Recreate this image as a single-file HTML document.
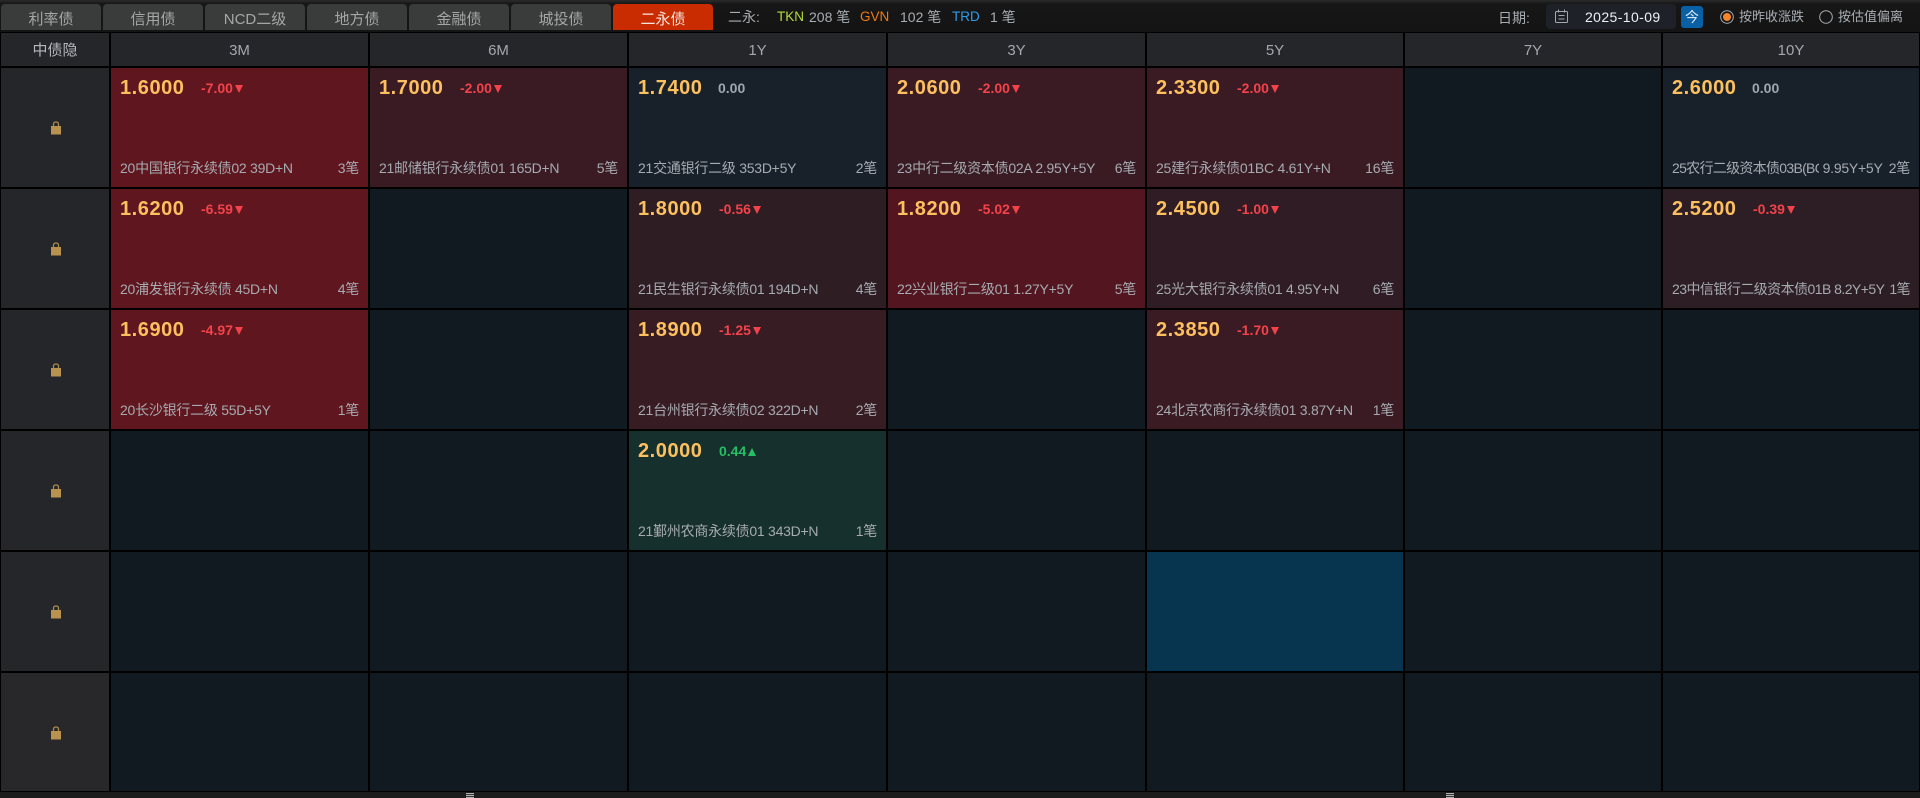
<!DOCTYPE html>
<html lang="zh-CN"><head><meta charset="utf-8"><title>二永债</title>
<style>
*{box-sizing:border-box}
html,body{margin:0;padding:0;width:1920px;height:798px;overflow:hidden;background:#000;font-family:"Liberation Sans","Noto Sans CJK SC",sans-serif}
.top{position:absolute;left:0;top:0;width:1920px;height:32px;background:linear-gradient(#2b2b2b 0,#161616 4px,#141414 100%)}
.t{position:absolute;white-space:nowrap;font-size:14px;line-height:20px;color:#a9adb2}
.tab{position:absolute;top:4px;width:100px;height:26px;border-radius:4px 4px 0 0;background:#3a3c3c;color:#a5a7a7;font-size:15px;line-height:31px;text-align:center;overflow:hidden}
.tab.on{background:#c92c00;color:#f3e6e0}
.h{position:absolute;top:33px;height:33px;background:#24262a;color:#a3a8ae;font-size:15px;line-height:35px;text-align:center}
.l{position:absolute;left:1px;width:108px;height:119px;background:#24262a}
.l svg{position:absolute;left:49px;top:53px}
.c{position:absolute;height:119px;background:#121a21;overflow:hidden}
.x1{left:111px;width:257px}.x2{left:370px;width:257px}.x3{left:629px;width:257px}.x4{left:888px;width:257px}.x5{left:1147px;width:256px}.x6{left:1405px;width:256px}.x7{left:1663px;width:256px}
.r1{top:68px}.r2{top:189px}.r3{top:310px}.r4{top:431px}.r5{top:552px}.r6{top:673px;height:118px}
.p{position:absolute;left:9px;top:6px;font-size:20px;line-height:28px;font-weight:700;color:#fdc05f;letter-spacing:.55px}
.d{position:absolute;left:90px;top:10px;font-size:14px;line-height:20px;font-weight:700;color:#f4424a;white-space:nowrap}
.d.n{left:89px;color:#9ea7b0}.d.g{color:#27bf63}
.d i{display:inline-block;width:0;height:0;margin-left:2px;border-left:4.5px solid transparent;border-right:4.5px solid transparent;border-top:8px solid #f4424a;vertical-align:0}
.d.g i{border-top:0;border-bottom:8px solid #27bf63}
.s{position:absolute;left:9px;right:9px;top:90px;font-size:14px;line-height:20px;color:#a6abb0;white-space:nowrap;letter-spacing:-.25px}
.s b{position:absolute;right:0;top:0;font-weight:400}
.s u{display:inline-block;vertical-align:top;text-decoration:none;overflow:hidden}
.hd{position:absolute;top:793px;width:8px;height:5px;background:repeating-linear-gradient(#b0b0b0 0,#b0b0b0 1px,#3a3a3a 1px,#3a3a3a 2px)}
</style></head><body>
<div class="top"></div>
<div class="tab" style="left:1px">利率债</div><div class="tab" style="left:103px">信用债</div><div class="tab" style="left:205px">NCD二级</div><div class="tab" style="left:307px">地方债</div><div class="tab" style="left:409px">金融债</div><div class="tab" style="left:511px">城投债</div><div class="tab on" style="left:613px">二永债</div>
<div class="t" style="left:728px;top:7px">二永:</div>
<div class="t" style="left:777px;top:7px;color:#b4dc3c;font-size:13.500px">TKN</div><div class="t" style="left:809px;top:7px">208 笔</div>
<div class="t" style="left:860px;top:7px;color:#f07a10;font-size:13.500px">GVN</div><div class="t" style="left:900px;top:7px">102 笔</div>
<div class="t" style="left:952px;top:7px;color:#2f9be8;font-size:13.500px">TRD</div><div class="t" style="left:990px;top:7px">1 笔</div>
<div class="t" style="left:1498px;top:8px">日期:</div>
<div style="position:absolute;left:1546px;top:4px;width:130px;height:25px;background:#1e2228;border-radius:4px"></div>
<svg style="position:absolute;left:1554px;top:9px" width="15" height="15" viewBox="0 0 15 15" fill="none" stroke="#a5a9ad" stroke-width="1"><rect x="1.500" y="2.500" width="12" height="11" rx="1"/><path d="M4.500 .5v3M10.500 .5v3M4.500 6.500h6M4.500 10h6"/></svg>
<div class="t" style="left:1585px;top:7px;color:#eef1f4;letter-spacing:.4px">2025-10-09</div>
<div style="position:absolute;left:1681px;top:6px;width:22px;height:22px;background:#0a60a4;border-radius:3px;color:#d8e6f2;font-size:14px;line-height:22px;text-align:center">今</div>
<svg style="position:absolute;left:1720px;top:10px" width="14" height="14" viewBox="0 0 14 14"><circle cx="7" cy="7" r="6.300" fill="none" stroke="#a9adb2"/><circle cx="7" cy="7" r="4" fill="#f5842a"/></svg>
<div class="t" style="left:1739px;top:7px;font-size:13px">按昨收涨跌</div>
<svg style="position:absolute;left:1819px;top:10px" width="14" height="14" viewBox="0 0 14 14"><circle cx="7" cy="7" r="6.300" fill="none" stroke="#a9adb2"/></svg>
<div class="t" style="left:1838px;top:7px;font-size:13px">按估值偏离</div>

<div class="h" style="left:1px;width:108px;color:#b4b8bc">中债隐</div>
<div class="h x1">3M</div><div class="h x2">6M</div><div class="h x3">1Y</div><div class="h x4">3Y</div><div class="h x5">5Y</div><div class="h x6">7Y</div><div class="h x7">10Y</div>

<div class="l r1"><svg width="12" height="14" viewBox="0 0 12 14"><path d="M3.500 5V3.200C3.500 1.800 4.500 1 6 1s2.500.8 2.500 2.200V5" fill="none" stroke="#a98a4e" stroke-width="1.300"/><rect x="1" y="5" width="10" height="8.500" fill="#b8924e"/></svg></div>
<div class="l r2"><svg width="12" height="14" viewBox="0 0 12 14"><path d="M3.500 5V3.200C3.500 1.800 4.500 1 6 1s2.500.8 2.500 2.200V5" fill="none" stroke="#a98a4e" stroke-width="1.300"/><rect x="1" y="5" width="10" height="8.500" fill="#b8924e"/></svg></div>
<div class="l r3"><svg width="12" height="14" viewBox="0 0 12 14"><path d="M3.500 5V3.200C3.500 1.800 4.500 1 6 1s2.500.8 2.500 2.200V5" fill="none" stroke="#a98a4e" stroke-width="1.300"/><rect x="1" y="5" width="10" height="8.500" fill="#b8924e"/></svg></div>
<div class="l r4"><svg width="12" height="14" viewBox="0 0 12 14"><path d="M3.500 5V3.200C3.500 1.800 4.500 1 6 1s2.500.8 2.500 2.200V5" fill="none" stroke="#a98a4e" stroke-width="1.300"/><rect x="1" y="5" width="10" height="8.500" fill="#b8924e"/></svg></div>
<div class="l r5"><svg width="12" height="14" viewBox="0 0 12 14"><path d="M3.500 5V3.200C3.500 1.800 4.500 1 6 1s2.500.8 2.500 2.200V5" fill="none" stroke="#a98a4e" stroke-width="1.300"/><rect x="1" y="5" width="10" height="8.500" fill="#b8924e"/></svg></div>
<div class="l r6" style="height:118px;background:#28282b"><svg width="12" height="14" viewBox="0 0 12 14"><path d="M3.500 5V3.200C3.500 1.800 4.500 1 6 1s2.500.8 2.500 2.200V5" fill="none" stroke="#a98a4e" stroke-width="1.300"/><rect x="1" y="5" width="10" height="8.500" fill="#b8924e"/></svg></div>

<div class="c x1 r1" style="background:#5f161f"><div class="p">1.6000</div><div class="d">-7.00<i></i></div><div class="s">20中国银行永续债02 39D+N<b>3笔</b></div></div>
<div class="c x2 r1" style="background:#3a1b24"><div class="p">1.7000</div><div class="d">-2.00<i></i></div><div class="s">21邮储银行永续债01 165D+N<b>5笔</b></div></div>
<div class="c x3 r1" style="background:#18212a"><div class="p">1.7400</div><div class="d n">0.00</div><div class="s">21交通银行二级 353D+5Y<b>2笔</b></div></div>
<div class="c x4 r1" style="background:#3a1b24"><div class="p">2.0600</div><div class="d">-2.00<i></i></div><div class="s">23中行二级资本债02A 2.95Y+5Y<b>6笔</b></div></div>
<div class="c x5 r1" style="background:#3a1b24"><div class="p">2.3300</div><div class="d">-2.00<i></i></div><div class="s">25建行永续债01BC 4.61Y+N<b>16笔</b></div></div>
<div class="c x6 r1"></div>
<div class="c x7 r1" style="background:#18212a"><div class="p">2.6000</div><div class="d n">0.00</div><div class="s"><u style="width:147px;letter-spacing:-.7px">25农行二级资本债03B(BC)</u> 9.95Y+5Y<b>2笔</b></div></div>

<div class="c x1 r2" style="background:#5f161f"><div class="p">1.6200</div><div class="d">-6.59<i></i></div><div class="s">20浦发银行永续债 45D+N<b>4笔</b></div></div>
<div class="c x2 r2"></div>
<div class="c x3 r2" style="background:#2f1d24"><div class="p">1.8000</div><div class="d">-0.56<i></i></div><div class="s">21民生银行永续债01 194D+N<b>4笔</b></div></div>
<div class="c x4 r2" style="background:#531621"><div class="p">1.8200</div><div class="d">-5.02<i></i></div><div class="s">22兴业银行二级01 1.27Y+5Y<b>5笔</b></div></div>
<div class="c x5 r2" style="background:#301c24"><div class="p">2.4500</div><div class="d">-1.00<i></i></div><div class="s">25光大银行永续债01 4.95Y+N<b>6笔</b></div></div>
<div class="c x6 r2"></div>
<div class="c x7 r2" style="background:#2d1d25"><div class="p">2.5200</div><div class="d">-0.39<i></i></div><div class="s" style="letter-spacing:-.55px">23中信银行二级资本债01B 8.2Y+5Y<b>1笔</b></div></div>

<div class="c x1 r3" style="background:#5f161f"><div class="p">1.6900</div><div class="d">-4.97<i></i></div><div class="s">20长沙银行二级 55D+5Y<b>1笔</b></div></div>
<div class="c x2 r3"></div>
<div class="c x3 r3" style="background:#381c24"><div class="p">1.8900</div><div class="d">-1.25<i></i></div><div class="s">21台州银行永续债02 322D+N<b>2笔</b></div></div>
<div class="c x4 r3"></div>
<div class="c x5 r3" style="background:#3a1b24"><div class="p">2.3850</div><div class="d">-1.70<i></i></div><div class="s">24北京农商行永续债01 3.87Y+N<b>1笔</b></div></div>
<div class="c x6 r3"></div><div class="c x7 r3"></div>

<div class="c x1 r4"></div><div class="c x2 r4"></div>
<div class="c x3 r4" style="background:#16302d"><div class="p">2.0000</div><div class="d g">0.44<i></i></div><div class="s">21鄞州农商永续债01 343D+N<b>1笔</b></div></div>
<div class="c x4 r4"></div><div class="c x5 r4"></div><div class="c x6 r4"></div><div class="c x7 r4"></div>

<div class="c x1 r5"></div><div class="c x2 r5"></div><div class="c x3 r5"></div><div class="c x4 r5"></div><div class="c x5 r5" style="background:#07344f"></div><div class="c x6 r5"></div><div class="c x7 r5"></div>
<div class="c x1 r6"></div><div class="c x2 r6"></div><div class="c x3 r6"></div><div class="c x4 r6"></div><div class="c x5 r6"></div><div class="c x6 r6"></div><div class="c x7 r6"></div>

<div style="position:absolute;left:0;top:792px;width:1920px;height:6px;background:#1c1c1c"></div>
<div class="hd" style="left:466px"></div><div class="hd" style="left:1446px"></div>
</body></html>
